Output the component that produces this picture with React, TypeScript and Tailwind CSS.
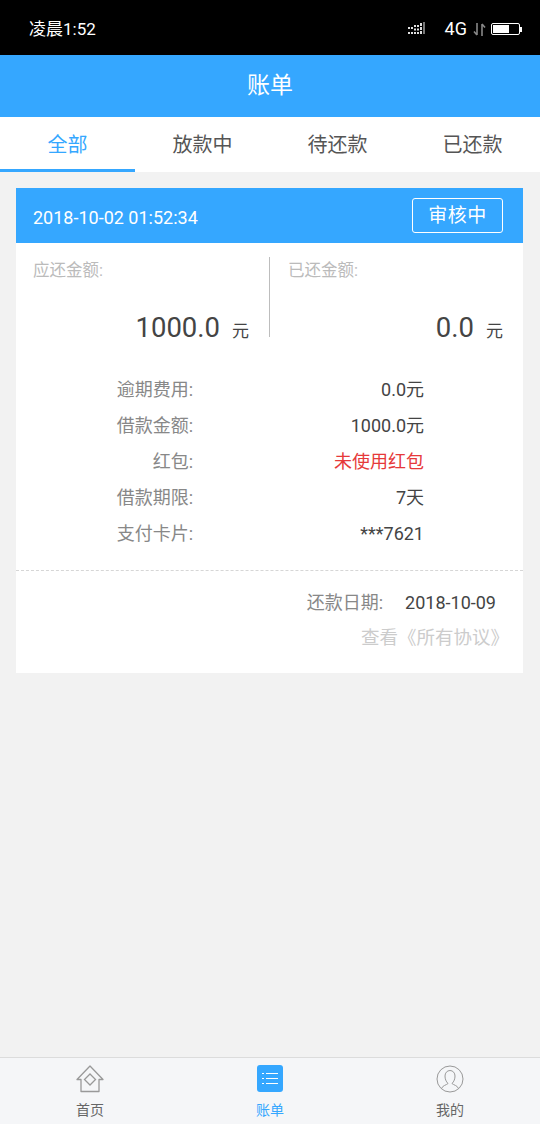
import React from "react";

const cjk = "font-['Roboto','Noto_Sans_CJK_SC',sans-serif]";

const tabs = ["全部", "放款中", "待还款", "已还款"];

const details = [
  { label: "逾期费用:", value: "0.0元", red: false },
  { label: "借款金额:", value: "1000.0元", red: false },
  { label: "红包:", value: "未使用红包", red: true },
  { label: "借款期限:", value: "7天", red: false },
  { label: "支付卡片:", value: "***7621", red: false },
];

const StatusBar = () => (
  <div className="flex h-[55px] items-center justify-between bg-black pl-[29px] pr-[18px] pt-[3px] text-white">
    <span className="text-[17px] leading-none">凌晨1:52</span>
    <div className="flex items-center">
      <svg width="18" height="14" viewBox="0 0 18 14" fill="#e0e0e0">
        <rect x="0" y="5" width="2" height="2" />
        <rect x="0" y="10" width="2" height="2" />
        <rect x="3" y="5" width="2" height="2" />
        <rect x="3" y="10" width="2" height="2" />
        <rect x="6" y="3" width="2" height="2" />
        <rect x="6" y="6.500" width="2" height="2" />
        <rect x="6" y="10" width="2" height="2" />
        <rect x="9" y="3" width="2" height="2" />
        <rect x="9" y="6.500" width="2" height="2" />
        <rect x="9" y="10" width="2" height="2" />
        <rect x="12" y="1" width="2" height="3" />
        <rect x="12" y="5" width="2" height="3" />
        <rect x="12" y="9" width="2" height="3" />
        <rect x="15" y="0" width="2" height="12" fill="#777" />
      </svg>
      <span className="ml-[19px] text-[18px] leading-none">4G</span>
      <svg className="ml-[6px]" width="13" height="15" viewBox="0 0 13 15" fill="none" stroke="#888" strokeWidth="1.6">
        <path d="M4 1v12M1 9.500l3 3.500M9 14V2M9 2l3 3.500" />
      </svg>
      <div className="ml-[5px] h-[12px] w-[29px] rounded-[2px] border border-white p-[1px]">
        <div className="h-full w-[16px] bg-white" />
      </div>
      <div className="h-[5px] w-[2px] bg-white" />
    </div>
  </div>
);

const Tabs = () => (
  <div className="flex h-[55px] bg-white">
    {tabs.map((t, i) => (
      <div
        key={t}
        className={
          i === 0
            ? "flex flex-1 items-center justify-center border-b-[3px] border-[#35a7ff] pt-[3px] text-[20px] text-[#35a7ff]"
            : "flex flex-1 items-center justify-center border-b-[3px] border-white pt-[3px] text-[20px] text-[#555555]"
        }
      >
        {t}
      </div>
    ))}
  </div>
);

const Amount = ({ label, value, left }: { label: string; value: string; left?: boolean }) => (
  <div className={left ? "flex h-[80px] w-[254px] flex-col justify-between border-r border-[#bdbdbd] pr-[20px] pl-[17px]" : "flex h-[80px] flex-1 flex-col justify-between pl-[18px] pr-[20px]"}>
    <div className="text-[16.500px] leading-[28px] text-[#bbbbbb]">{label}</div>
    <div className="flex items-baseline justify-end text-[#444444]">
      <span className="text-[27.500px] leading-[12px]">{value}</span>
      <span className="ml-[12px] text-[17px] leading-[12px]">元</span>
    </div>
  </div>
);

const Card = () => (
  <div className="mx-[16px] mt-[16px] w-[507px] bg-white">
    <div className="flex h-[55px] items-center justify-between bg-[#35a7ff] pl-[17px] pr-[20px] text-white">
      <span className="pt-[3px] text-[18px]">2018-10-02 01:52:34</span>
      <span className="flex h-[35px] w-[91px] items-center justify-center rounded-[3px] border border-white pt-[1px] text-[19px] tracking-[0.5px]">
        审核中
      </span>
    </div>
    <div className="flex pt-[14px]">
      <Amount left label="应还金额:" value="1000.0" />
      <Amount label="已还金额:" value="0.0" />
    </div>
    <div className="flex flex-col gap-[8px] pt-[38px] pb-[23px]">
      {details.map((d) => (
        <div key={d.label} className="flex h-[28px] items-center text-[18px]">
          <span className="w-[177px] text-right text-[#888888]">{d.label}</span>
          <span className={d.red ? "w-[231px] text-right text-[#e6393a]" : "w-[231px] text-right text-[#444444]"}>{d.value}</span>
        </div>
      ))}
    </div>
    <div className="border-t border-dashed border-[#d6d6d6] pt-[17px] pb-[21px]">
      <div className="flex h-[28px] items-center justify-end pr-[27px] text-[18px]">
        <span className="text-[#888888]">还款日期:</span>
        <span className="ml-[22px] text-[#444444]">2018-10-09</span>
      </div>
      <div className="mt-[8px] pr-[14px] text-right text-[18.500px] leading-[28px] text-[#cccccc]">查看《所有协议》</div>
    </div>
  </div>
);

const BottomNav = () => (
  <div className="flex h-[67px] border-t border-[#dcdcdc] bg-[#f5f6f8] pt-[7px]">
    <div className="flex w-[180px] flex-col items-center text-[#666666]">
      <svg width="28" height="28" viewBox="0 0 28 28" fill="none" stroke="#999999" strokeWidth="1.3">
        <path d="M14 1L1 14.500l4 0V26.500h18V14.500h4z" strokeLinejoin="round" />
        <path d="M14 9l5.500 5.500L14 20l-5.500-5.500z" />
      </svg>
      <span className="mt-[9px] text-[14px] leading-[16px]">首页</span>
    </div>
    <div className="flex w-[180px] flex-col items-center text-[#35a7ff]">
      <div className="flex h-[27px] w-[26px] flex-col justify-center gap-[4px] rounded-[3px] bg-[#35a7ff] px-[5px]">
        <div className="flex gap-[2px]"><div className="h-[1px] w-[2px] bg-white" /><div className="h-[1px] flex-1 bg-white" /></div>
        <div className="flex gap-[2px]"><div className="h-[1px] w-[2px] bg-white" /><div className="h-[1px] flex-1 bg-white" /></div>
        <div className="flex gap-[2px]"><div className="h-[1px] w-[2px] bg-white" /><div className="h-[1px] flex-1 bg-white" /></div>
      </div>
      <span className="mt-[10px] text-[14px] leading-[16px]">账单</span>
    </div>
    <div className="flex w-[180px] flex-col items-center text-[#666666]">
      <svg width="28" height="28" viewBox="0 0 28 28" fill="none" stroke="#999999" strokeWidth="1">
        <circle cx="14" cy="14" r="13" />
        <path d="M5.500 23.500c1-3 5-3.500 6.500-5-2-2-3-4.500-3-7.500 0-3 2-5.500 5-5.500s5 2.500 5 5.500c0 3-1 5.500-3 7.500 1.500 1.500 5.500 2 6.500 5" />
      </svg>
      <span className="mt-[9px] text-[14px] leading-[16px]">我的</span>
    </div>
  </div>
);

export default function App() {
  return (
    <div className={`${cjk} flex h-[1124px] w-[540px] flex-col overflow-hidden bg-[#f2f2f2]`}>
      <StatusBar />
      <div className="flex h-[62px] items-center justify-center bg-[#35a7ff] pt-[1px] text-[23px] text-white">账单</div>
      <Tabs />
      <div className="flex-1">
        <Card />
      </div>
      <BottomNav />
    </div>
  );
}
